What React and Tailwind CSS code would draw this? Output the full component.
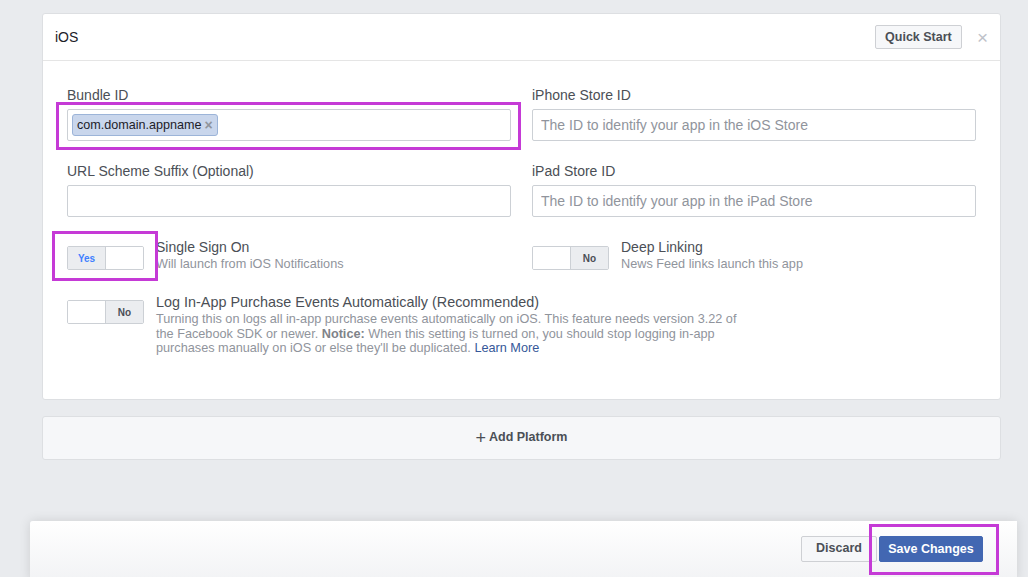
import React from "react";

const font = { fontFamily: '"Liberation Sans", Arial, sans-serif' };

function Field({ label, placeholder, children }) {
  return (
    <div className="flex flex-col">
      <label className="text-[14px] leading-4 text-[#4b4f56] mb-[6px]">{label}</label>
      <div className="relative">
        {children || (
          <input
            placeholder={placeholder}
            className="w-full h-[32px] border border-[#ccd0d5] rounded-[2px] px-[8px] text-[14px] text-[#1d2129] placeholder:text-[#90949c] bg-white outline-none"
          />
        )}
      </div>
    </div>
  );
}

function Toggle({ on }) {
  return (
    <div className="flex w-[77px] h-[24px] border border-[#ccd0d5] rounded-[2px] overflow-hidden shrink-0">
      {on ? (
        <>
          <div className="w-[38px] bg-[#ebedf0] border-r border-[#ccd0d5] flex items-center justify-center text-[10px] font-bold text-[#4080ff]">
            Yes
          </div>
          <div className="flex-1 bg-white"></div>
        </>
      ) : (
        <>
          <div className="flex-1 bg-white"></div>
          <div className="w-[38px] bg-[#ebedf0] border-l border-[#ccd0d5] flex items-center justify-center text-[10px] font-bold text-[#4b4f56]">
            No
          </div>
        </>
      )}
    </div>
  );
}

export default function App() {
  return (
    <div className="w-[1028px] h-[577px] bg-[#e9ebee] overflow-hidden" style={font}>
      <div className="pl-[42px] pr-[27px] pt-[13px]">
        {/* iOS platform card */}
        <div className="bg-white border border-[#dddfe2] rounded-[3px]">
          <div className="h-[47px] border-b border-[#e5e5e5] flex items-center pl-[12px] pr-[12px]">
            <span className="text-[14px] text-[#1d2129]">iOS</span>
            <button className="ml-auto h-[24px] w-[87px] bg-[#f6f7f9] border border-[#ced0d4] rounded-[2px] text-[12.5px] font-bold text-[#4b4f56]">
              Quick Start
            </button>
            <span className="ml-[15px] text-[19px] leading-none text-[#bec2c9]">×</span>
          </div>

          <div className="px-[24px] pt-[26px] pb-[43px]">
            <div className="grid grid-cols-2 gap-x-[21px] gap-y-[22px]">
              <Field label="Bundle ID">
                <div className="w-full h-[32px] border border-[#ccd0d5] rounded-[2px] bg-white flex items-center px-[4px]">
                  <span className="h-[22px] flex items-center gap-[3px] px-[4px] bg-[#c9d6ec] border border-[#9cb4d8] rounded-[3px] text-[12.6px] text-[#1d2129]">
                    com.domain.appname
                    <span className="text-[#90949c] text-[14px] font-bold leading-none">×</span>
                  </span>
                </div>
                <div className="absolute left-[-11px] right-[-10px] top-[-7px] bottom-[-9px] border-[3px] border-[#c53ad6] pointer-events-none"></div>
              </Field>
              <Field label="iPhone Store ID" placeholder="The ID to identify your app in the iOS Store" />
              <Field label="URL Scheme Suffix (Optional)" placeholder="" />
              <Field label="iPad Store ID" placeholder="The ID to identify your app in the iPad Store" />

              <div className="flex items-start">
                <div className="relative mt-[7px]">
                  <Toggle on />
                  <div className="absolute left-[-15px] right-[-14px] top-[-15px] bottom-[-11px] border-[3px] border-[#c53ad6] pointer-events-none"></div>
                </div>
                <div className="ml-[12px]">
                  <div className="text-[14px] leading-4 text-[#4b4f56]">Single Sign On</div>
                  <div className="mt-[1px] text-[12.7px] leading-4 text-[#90949c]">Will launch from iOS Notifications</div>
                </div>
              </div>
              <div className="flex items-start">
                <div className="mt-[7px]">
                  <Toggle />
                </div>
                <div className="ml-[12px]">
                  <div className="text-[14px] leading-4 text-[#4b4f56]">Deep Linking</div>
                  <div className="mt-[1px] text-[12.7px] leading-4 text-[#90949c]">News Feed links launch this app</div>
                </div>
              </div>
            </div>

            <div className="flex items-start mt-[22px]">
              <div className="mt-[6px]">
                <Toggle />
              </div>
              <div className="ml-[12px]">
                <div className="text-[14.4px] leading-4 text-[#4b4f56]">
                  Log In-App Purchase Events Automatically (Recommended)
                </div>
                <p className="mt-[2px] text-[12.7px] leading-[14.5px] text-[#90949c]">
                  Turning this on logs all in-app purchase events automatically on iOS. This feature needs version 3.22 of
                  <br />
                  the Facebook SDK or newer. <span className="font-bold text-[#7f8389]">Notice:</span> When this setting is turned on, you should stop logging in-app
                  <br />
                  purchases manually on iOS or else they'll be duplicated.{" "}
                  <span className="text-[#365899]">Learn More</span>
                </p>
              </div>
            </div>
          </div>
        </div>

        {/* Add platform */}
        <div className="mt-[16px] h-[44px] bg-[#f6f7f9] border border-[#dddfe2] rounded-[3px] flex items-center justify-center gap-[3px] text-[12.5px] font-bold text-[#4b4f56]">
          <span className="text-[18px] font-normal leading-none">+</span>
          Add Platform
        </div>
      </div>

      {/* Save bar */}
      <div className="ml-[30px] w-[987px] mt-[61px] h-[60px] rounded-tl-[3px] bg-gradient-to-b from-white to-[#f2f3f5] shadow-[0_0_12px_rgba(0,0,0,0.12)] flex items-start justify-end pt-[15px] pr-[34px] gap-[2px]">
        <button className="h-[26px] w-[76px] bg-[#f6f7f9] border border-[#ced0d4] rounded-[2px] text-[12.5px] font-bold text-[#4b4f56]">
          Discard
        </button>
        <div className="relative">
          <button className="h-[26px] w-[104px] bg-[#4267b2] border border-[#4267b2] rounded-[2px] text-[12.5px] font-bold text-white">
            Save Changes
          </button>
          <div className="absolute left-[-10px] right-[-16px] top-[-12px] bottom-[-13px] border-[3px] border-[#c53ad6] pointer-events-none"></div>
        </div>
      </div>
    </div>
  );
}
